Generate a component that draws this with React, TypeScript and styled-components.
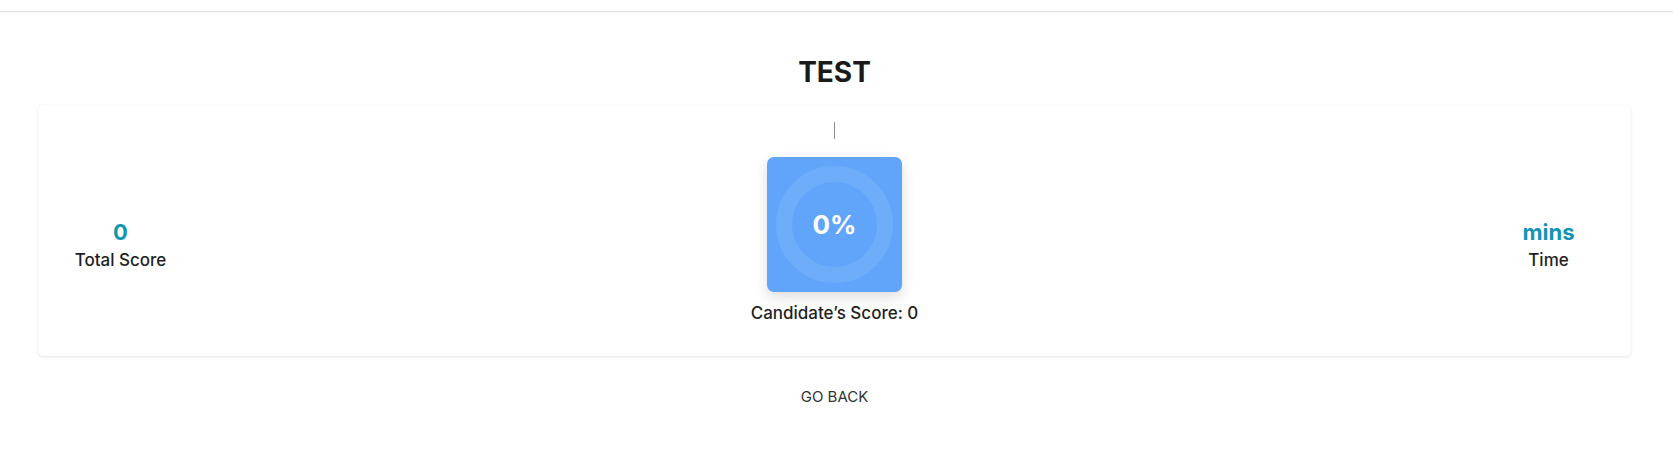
import React from "react";
import styled, { createGlobalStyle } from "styled-components";

const GlobalStyle = createGlobalStyle`
  html, body { margin: 0; padding: 0; background: #ffffff; }
  body { font-family: Inter, "Noto Sans", "Liberation Sans", sans-serif; color: #1f1f1f; }
  * { box-sizing: border-box; }
`;

const Page = styled.div`
  display: flex;
  flex-direction: column;
  min-height: 456px;
`;

const TopBar = styled.header`
  height: 12px;
  border-bottom: 1px solid #e2e2e2;
  box-shadow: 0 1px 1px rgba(0, 0, 0, 0.03);
`;

const Main = styled.main`
  display: flex;
  flex-direction: column;
  align-items: stretch;
  padding: 0 42px 0 38px;
`;

const Title = styled.h1`
  margin: 42px 0 15px;
  text-align: center;
  font-size: 28px;
  line-height: 36px;
  font-weight: 700;
  color: #1a1a1a;
`;

const Card = styled.section`
  display: flex;
  align-items: flex-start;
  justify-content: space-between;
  padding: 17px 16px 31px;
  background: #fff;
  border-radius: 5px;
  box-shadow: 0 1px 3px rgba(0, 0, 0, 0.1), 0 0 1px rgba(0, 0, 0, 0.06);
`;

const Stat = styled.div`
  width: 133px;
  padding-top: 96px;
  display: flex;
  flex-direction: column;
  align-items: center;
`;

const StatValue = styled.div`
  font-size: 22px;
  line-height: 28px;
  font-weight: 700;
  color: #1494b5;
`;

const StatLabel = styled.div`
  margin-top: 2px;
  font-size: 17px;
  line-height: 24px;
  font-weight: 500;
  color: #1f1f1f;
  white-space: nowrap;
`;

const Center = styled.div`
  display: flex;
  flex-direction: column;
  align-items: center;
`;

const Caret = styled.span`
  display: block;
  width: 1px;
  height: 17px;
  background: #8f8f8f;
`;

const ScoreTile = styled.div`
  margin-top: 18px;
  width: 135px;
  height: 135px;
  border-radius: 7px;
  background: #60a5fa;
  box-shadow: 0 5px 14px rgba(0, 0, 0, 0.14);
  display: flex;
  align-items: center;
  justify-content: center;
`;

const Ring = styled.div`
  width: 117px;
  height: 117px;
  border-radius: 50%;
  border: 16.5px solid rgba(255, 255, 255, 0.09);
  display: flex;
  align-items: center;
  justify-content: center;
`;

const Percent = styled.span`
  font-size: 26px;
  line-height: 34px;
  font-weight: 700;
  color: #ffffff;
`;

const CandidateScore = styled.div`
  margin-top: 9px;
  font-size: 17px;
  line-height: 24px;
  font-weight: 500;
  color: #1f1f1f;
`;

const BackButton = styled.button`
  align-self: center;
  margin-top: 31px;
  padding: 0;
  border: none;
  background: none;
  font-family: inherit;
  font-size: 15px;
  line-height: 20px;
  font-weight: 400;
  color: #333;
  cursor: pointer;
`;

export default function App() {
  return (
    <>
      <GlobalStyle />
      <Page>
        <TopBar />
        <Main>
          <Title>TEST</Title>
          <Card>
            <Stat>
              <StatValue>0</StatValue>
              <StatLabel>Total Score</StatLabel>
            </Stat>
            <Center>
              <Caret />
              <ScoreTile>
                <Ring>
                  <Percent>0%</Percent>
                </Ring>
              </ScoreTile>
              <CandidateScore>Candidate’s Score: 0</CandidateScore>
            </Center>
            <Stat>
              <StatValue>mins</StatValue>
              <StatLabel>Time</StatLabel>
            </Stat>
          </Card>
          <BackButton>GO BACK</BackButton>
        </Main>
      </Page>
    </>
  );
}
